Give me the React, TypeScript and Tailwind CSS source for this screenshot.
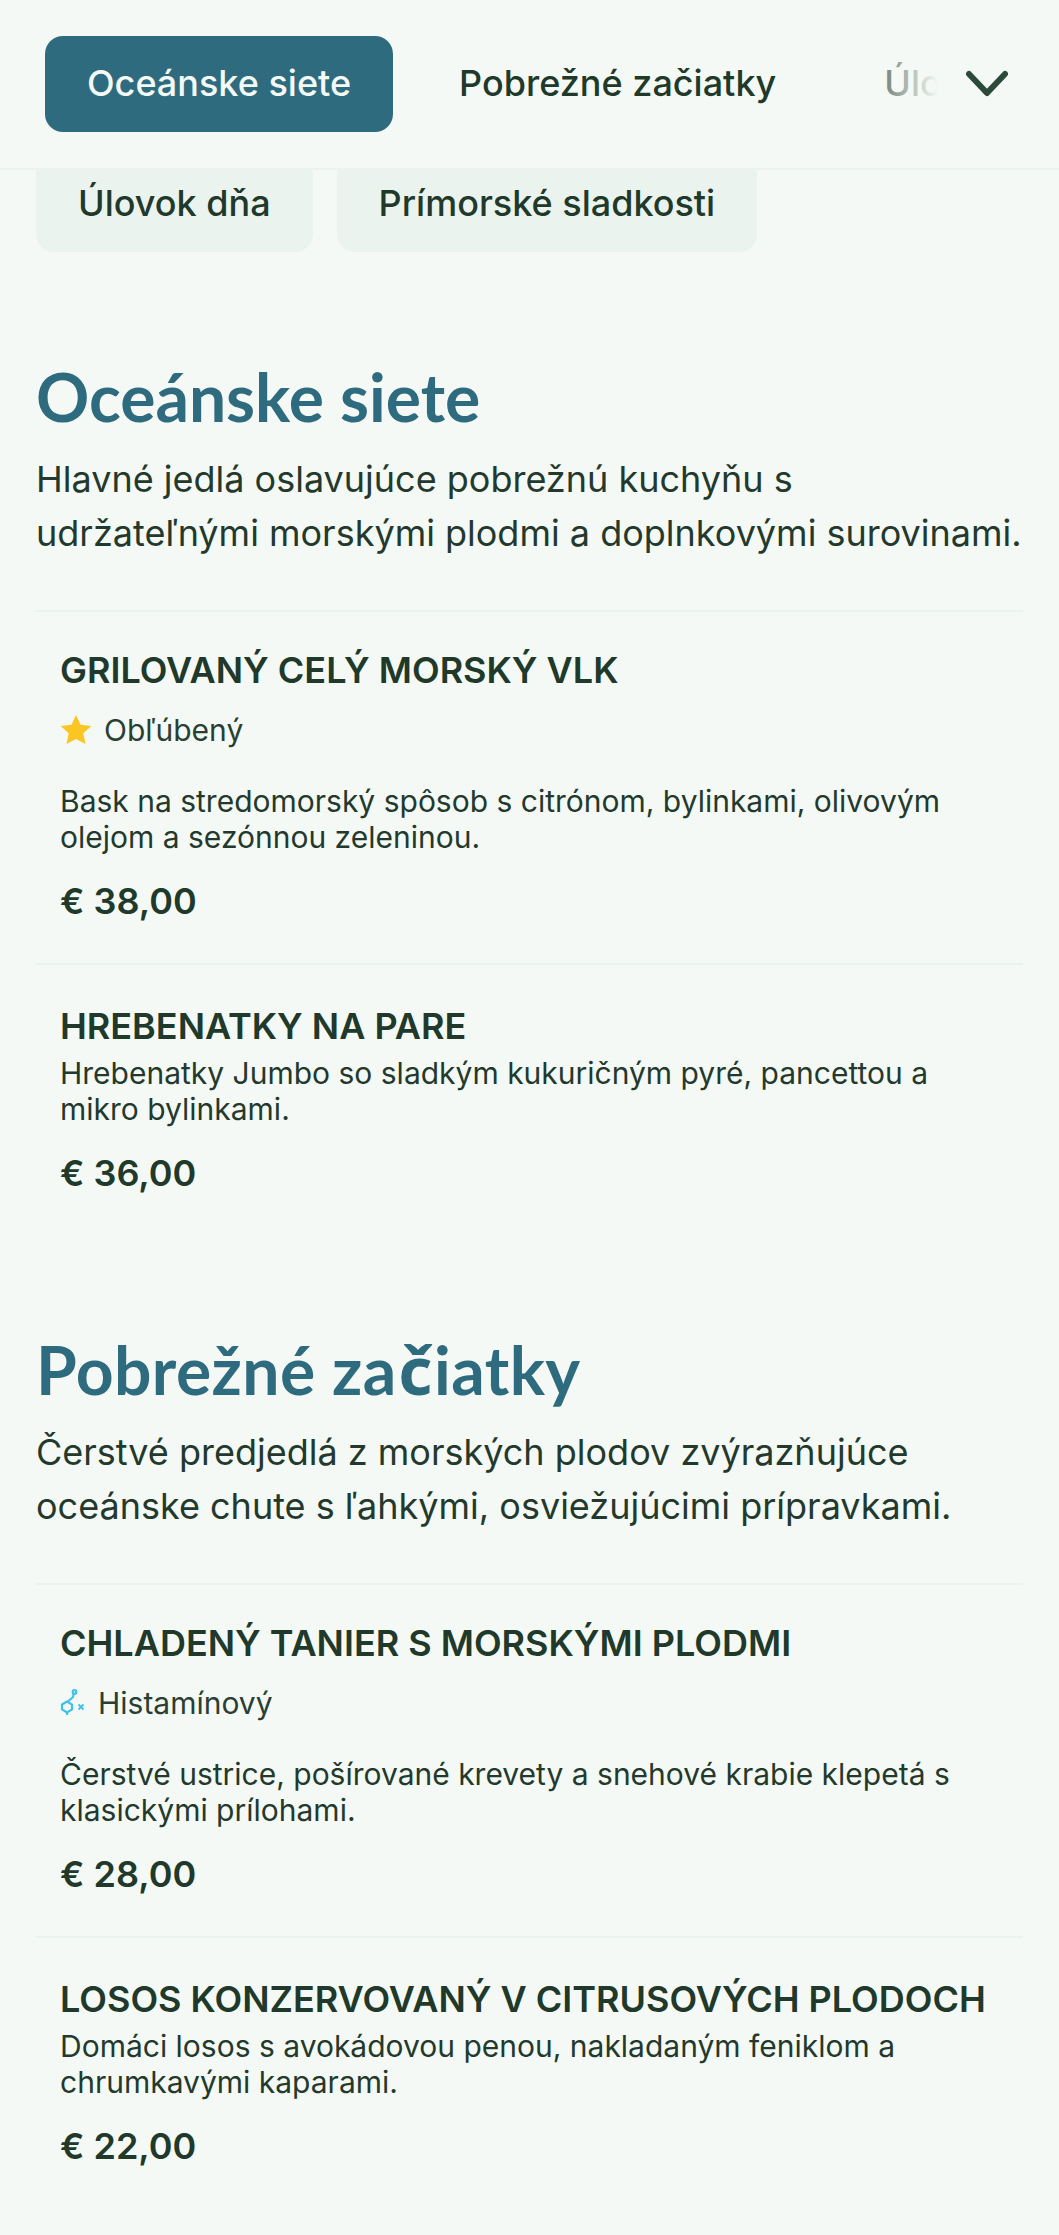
import React from "react";

const Star = () => (
  <svg width="32" height="32" viewBox="0 0 32 32" className="shrink-0">
    <path d="M16 1l4.5 9.8 10.8 1.2-8 7.3 2.2 10.7L16 25l-9.5 5 2.2-10.7-8-7.3 10.8-1.2z" fill="#fbc524" />
  </svg>
);

const Histamine = () => (
  <svg width="26" height="28" viewBox="0 0 26 28" fill="none" className="shrink-0" stroke="#3fc1ea" strokeWidth="2.2">
    <path d="M2 15.5l5-3 5 3v5l-5 3-5-3z" />
    <path d="M8 12.5l5-4.5 .8-3.5" />
    <circle cx="14.5" cy="3" r="1.8" />
    <path d="M7 23.5v2.5" />
    <path d="M18.5 15.5l5 5M23.5 15.5l-5 5" strokeWidth="1.8" />
  </svg>
);

type Item = { name: string; tag?: "star" | "hist"; desc: string; price: string };
type Section = { title: React.ReactNode; intro: string; items: Item[] };

const sections: Section[] = [
  {
    title: "Oceánske siete",
    intro: "Hlavné jedlá oslavujúce pobrežnú kuchyňu s udržateľnými morskými plodmi a doplnkovými surovinami.",
    items: [
      { name: "GRILOVANÝ CELÝ MORSKÝ VLK", tag: "star", desc: "Bask na stredomorský spôsob s citrónom, bylinkami, olivovým olejom a sezónnou zeleninou.", price: "€ 38,00" },
      { name: "HREBENATKY NA PARE", desc: "Hrebenatky Jumbo so sladkým kukuričným pyré, pancettou a mikro bylinkami.", price: "€ 36,00" },
    ],
  },
  {
    title: (
      <span className="tracking-[0.4px]">
        Pobrežné za<span className="mx-[1.5px] font-['Noto_Sans',sans-serif]">č</span>iatky
      </span>
    ),
    intro: "Čerstvé predjedlá z morských plodov zvýrazňujúce oceánske chute s ľahkými, osviežujúcimi prípravkami.",
    items: [
      { name: "CHLADENÝ TANIER S MORSKÝMI PLODMI", tag: "hist", desc: "Čerstvé ustrice, pošírované krevety a snehové krabie klepetá s klasickými prílohami.", price: "€ 28,00" },
      { name: "LOSOS KONZERVOVANÝ V CITRUSOVÝCH PLODOCH", desc: "Domáci losos s avokádovou penou, nakladaným feniklom a chrumkavými kaparami.", price: "€ 22,00" },
    ],
  },
];

function MenuItem({ item }: { item: Item }) {
  return (
    <article className={item.tag ? "border-t-2 border-[#ecf2ee] px-6 pt-[34px] pb-[38px]" : "border-t-2 border-[#ecf2ee] px-6 pt-[37px] pb-[38px]"}>
      <h3 className="mb-[5px] text-[36px] leading-[48px] font-semibold text-[#20392a]">{item.name}</h3>
      {item.tag && (
        <div className="mt-[15px] mb-[32px] flex h-[42px] items-center gap-[12px] text-[30px] text-[#2a3f33]">
          {item.tag === "star" ? <Star /> : <Histamine />}
          <span>{item.tag === "star" ? "Obľúbený" : "Histamínový"}</span>
        </div>
      )}
      <p className="text-[30px] leading-[36px] text-[#24392d]">{item.desc}</p>
      <p className="mt-[22px] text-[36px] leading-[48px] font-semibold text-[#20392a]">{item.price}</p>
    </article>
  );
}

export default function App() {
  return (
    <div className="h-[2235px] overflow-hidden bg-[#f4f9f5] font-['Inter',sans-serif]">
      <header className="relative z-10 flex h-[170px] items-start border-b-2 border-[#ecf2ee] bg-[#f4f9f5]">
        <nav className="relative flex h-full w-[938px] gap-[24px] overflow-hidden pl-[45px] pt-[36px] text-[36px] font-medium whitespace-nowrap text-[#20392a]">
          <span className="flex h-[96px] items-center rounded-[18px] bg-[#2f6b7e] px-[42px] pb-[2px] text-[#f4f9f5]">Oceánske siete</span>
          <span className="flex h-[96px] items-center px-[42px] pb-[2px]">Pobrežné začiatky</span>
          <span className="flex h-[96px] items-center px-[42px] pb-[2px]">Úlovok dňa</span>
          <div className="absolute top-0 right-0 h-full w-[90px] bg-gradient-to-r from-transparent to-[#f4f9f5]" />
        </nav>
        <svg width="42" height="28" viewBox="0 0 42 28" fill="none" className="mt-[70px] ml-[28px]">
          <path d="M3 4l18 19L39 4" stroke="#2c4a3a" strokeWidth="6" strokeLinecap="round" strokeLinejoin="round" />
        </svg>
      </header>

      <div className="-mt-[14px] flex gap-[24px] px-[36px] text-[36px] font-medium text-[#20392a]">
        <span className="flex h-[96px] items-center rounded-[18px] bg-[#ebf3ef] px-[42px] pb-[2px]">Úlovok dňa</span>
        <span className="flex h-[96px] items-center rounded-[18px] bg-[#ebf3ef] px-[42px] pb-[2px]">Prímorské sladkosti</span>
      </div>

      <main className="px-[36px] pt-[98px]">
        {sections.map((s, n) => (
          <section key={n} className="mb-[87px]">
            <h2 className="font-['Lato',sans-serif] text-[66px] leading-[94px] font-bold text-[#2f6b7e]">{s.title}</h2>
            <p className="mt-[8px] mb-[50px] text-[36px] leading-[54px] text-[#24392d]">{s.intro}</p>
            {s.items.map((i) => (
              <MenuItem key={i.name} item={i} />
            ))}
          </section>
        ))}
      </main>
    </div>
  );
}
